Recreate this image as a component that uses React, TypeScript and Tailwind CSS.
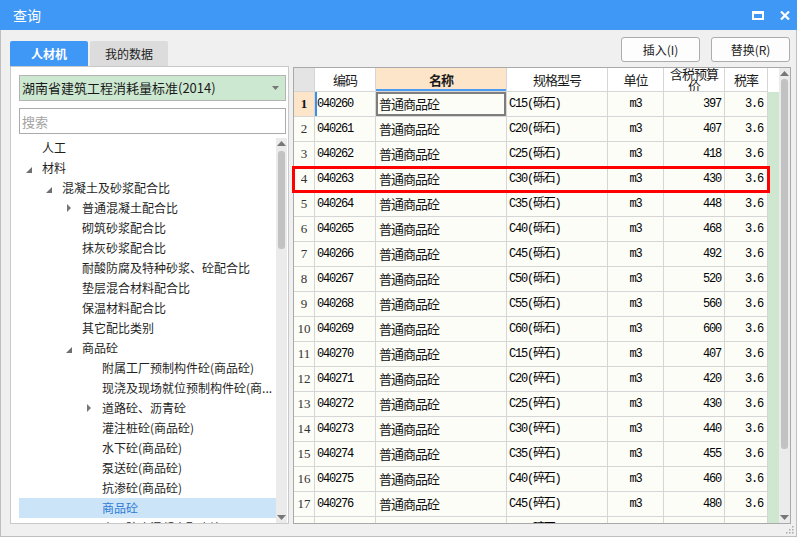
import React from "react"

// ── Data ───────────────────────────────────────────────────────────────────────

type Node = { t: string; l: number; a?: "open" | "closed"; sel?: boolean }

const TREE: Node[] = [
  { t: "人工", l: 0 },
  { t: "材料", l: 0, a: "open" },
  { t: "混凝土及砂浆配合比", l: 1, a: "open" },
  { t: "普通混凝土配合比", l: 2, a: "closed" },
  { t: "砌筑砂浆配合比", l: 2 },
  { t: "抹灰砂浆配合比", l: 2 },
  { t: "耐酸防腐及特种砂浆、砼配合比", l: 2 },
  { t: "垫层混合材料配合比", l: 2 },
  { t: "保温材料配合比", l: 2 },
  { t: "其它配比类别", l: 2 },
  { t: "商品砼", l: 2, a: "open" },
  { t: "附属工厂预制构件砼(商品砼)", l: 3 },
  { t: "现浇及现场就位预制构件砼(商...", l: 3 },
  { t: "道路砼、沥青砼", l: 3, a: "closed" },
  { t: "灌注桩砼(商品砼)", l: 3 },
  { t: "水下砼(商品砼)", l: 3 },
  { t: "泵送砼(商品砼)", l: 3 },
  { t: "抗渗砼(商品砼)", l: 3 },
  { t: "商品砼", l: 3, sel: true },
  { t: "商品防冻混凝土配合比", l: 3 },
]

const LEVEL_PAD = ["pl-[7px]", "pl-[27px]", "pl-[47px]", "pl-[67px]"]

const ROWS: [string, string, number][] = [
  ["040260", "C15(砾石)", 397],
  ["040261", "C20(砾石)", 407],
  ["040262", "C25(砾石)", 418],
  ["040263", "C30(砾石)", 430],
  ["040264", "C35(砾石)", 448],
  ["040265", "C40(砾石)", 468],
  ["040266", "C45(砾石)", 492],
  ["040267", "C50(砾石)", 520],
  ["040268", "C55(砾石)", 560],
  ["040269", "C60(砾石)", 600],
  ["040270", "C15(碎石)", 407],
  ["040271", "C20(碎石)", 420],
  ["040272", "C25(碎石)", 430],
  ["040273", "C30(碎石)", 440],
  ["040274", "C35(碎石)", 455],
  ["040275", "C40(碎石)", 460],
  ["040276", "C45(碎石)", 480],
  ["040277", "C50(碎石)", 500],
]

const CJK = "font-['Noto_Sans_CJK_SC',sans-serif]"
const MONO = "font-['Liberation_Mono','Noto_Sans_CJK_SC',monospace] text-[12px] tracking-[-1.2px] text-black"
const CELL = "h-full border-r border-[#d6d6d6] flex items-center shrink-0 overflow-hidden whitespace-nowrap"

// ── Small drawings ─────────────────────────────────────────────────────────────

function Arrow({ kind }: { kind?: "open" | "closed" }) {
  if (kind === "open")
    return (
      <svg width="7" height="7" className="mt-[4px]">
        <polygon points="6,0 6,6 0,6" fill="#6f6f6f" />
      </svg>
    )
  if (kind === "closed")
    return (
      <svg width="6" height="9">
        <polygon points="1,0 5,4 1,8" fill="#777" />
      </svg>
    )
  return null
}

function ScrollBar({ thumb }: { thumb: string }) {
  return (
    <div className="w-[11px] h-full bg-[#ebebeb] flex flex-col items-center shrink-0">
      <svg width="9" height="5" className="mt-[3px]">
        <polygon points="0,5 4.5,0 9,5" fill="#777" />
      </svg>
      <div className={`w-[7px] mt-[3px] rounded-[3px] bg-[#c2c2c2] ${thumb}`} />
      <div className="flex-1" />
      <svg width="9" height="5" className="mb-[3px]">
        <polygon points="0,0 9,0 4.5,5" fill="#777" />
      </svg>
    </div>
  )
}

// ── Table ──────────────────────────────────────────────────────────────────────

function HeaderRow() {
  return (
    <div className={`flex h-[24px] border-b border-[#d6d6d6] text-[13px] tracking-[-1px] text-[#1b1b1b] ${CJK}`}>
      <div className={`${CELL} w-[21px] bg-[#e4e4e4]`} />
      <div className={`${CELL} w-[61px] bg-white justify-center`}>编码</div>
      <div className={`${CELL} w-[131px] bg-[#fde5c9] justify-center font-bold shadow-[inset_0_-2px_0_#4b9bf0]`}>名称</div>
      <div className={`${CELL} w-[101px] bg-white justify-center`}>规格型号</div>
      <div className={`${CELL} w-[56px] bg-white justify-center`}>单位</div>
      <div className={`${CELL} w-[61px] bg-white justify-center`}>
        <div className="leading-[12px] text-center w-[52px] whitespace-normal">含税预算价</div>
      </div>
      <div className={`${CELL} w-[43px] bg-white justify-center`}>税率</div>
    </div>
  )
}

function DataRow({ i, code, spec, price }: { i: number; code: string; spec: string; price: number }) {
  const first = i === 0
  return (
    <div className="flex h-[25px] shrink-0 border-b border-[#d6d6d6] bg-[#fdfdf8] text-[#111]">
      <div
        className={`${CELL} w-[21px] justify-center font-['Liberation_Serif',serif] text-[13px] ${
          first ? "bg-[#fde5c9] font-bold" : "text-[#333]"
        }`}
      >
        {i + 1}
      </div>
      <div className={`${CELL} w-[61px] pl-[2px] ${MONO} ${first ? "shadow-[inset_2px_0_0_#3b8fea]" : ""}`}>{code}</div>
      <div
        className={`${CELL} w-[131px] pl-[3px] text-[13px] tracking-[-1px] ${CJK} ${
          first ? "shadow-[inset_0_0_0_2px_#7e7e7e]" : ""
        }`}
      >
        普通商品砼
      </div>
      <div className={`${CELL} w-[101px] pl-[2px] ${MONO}`}>{spec}</div>
      <div className={`${CELL} w-[56px] justify-center ${MONO}`}>m3</div>
      <div className={`${CELL} w-[61px] justify-end pr-[3px] ${MONO}`}>{price}</div>
      <div className={`${CELL} w-[43px] justify-end pr-[4px] ${MONO}`}>3.6</div>
    </div>
  )
}

function DataTable() {
  return (
    <div className="relative mt-[5px]">
      <div className="h-[457px] border border-[#a9a9a9] flex overflow-hidden bg-white">
        <div className="w-[474px] flex flex-col shrink-0">
          <HeaderRow />
          {ROWS.map(([code, spec, price], i) => (
            <DataRow key={code} i={i} code={code} spec={spec} price={price} />
          ))}
        </div>
        <div className="w-[11px] flex flex-col shrink-0">
          <div className="h-[24px] bg-white" />
          <div className="flex-1 bg-[#cfe7d1]" />
        </div>
        <ScrollBar thumb="h-[370px]" />
      </div>
      {/* highlight box drawn over row 4 */}
      <div className="absolute left-[-1px] top-[99px] w-[478px] h-[27px] border-[3px] border-[#ff0000]" />
    </div>
  )
}

// ── Left panel ─────────────────────────────────────────────────────────────────

function TreePanel() {
  return (
    <div className="h-[458px] border border-[#c9c9c9] bg-white flex flex-col">
      <div className={`mt-[8px] ml-[8px] w-[267px] h-[26px] shrink-0 border border-[#b4b4b4] bg-[#cde8d1] flex items-center pl-[2px] text-[13px] text-[#1a1a1a] ${CJK}`}>
        湖南省建筑工程消耗量标准(2014)
        <svg width="7" height="4" className="ml-auto mr-[6px]">
          <polygon points="0,0 7,0 3.5,4" fill="#777" />
        </svg>
      </div>
      <input
        placeholder="搜索"
        className={`mt-[7px] ml-[8px] w-[267px] h-[26px] shrink-0 border border-[#ababab] bg-white px-[2px] text-[13px] outline-none placeholder:text-[#a3a3a3] ${CJK}`}
      />
      <div className="mt-[4px] ml-[8px] flex flex-1 min-h-0">
        <div className={`w-[257px] overflow-hidden text-[12px] text-[#1f1f1f] ${CJK}`}>
          {TREE.map((n, i) => (
            <div
              key={i}
              className={`h-[20px] flex items-center whitespace-nowrap ${LEVEL_PAD[n.l]} ${
                n.sel ? "bg-[#cce4f7] text-[#2f7bd6]" : ""
              }`}
            >
              <div className="w-[16px] h-[20px] flex items-center shrink-0">
                <Arrow kind={n.a} />
              </div>
              {n.t}
            </div>
          ))}
        </div>
        <ScrollBar thumb="h-[98px] mt-[5px]" />
      </div>
    </div>
  )
}

// ── Page ───────────────────────────────────────────────────────────────────────

export default function App() {
  return (
    <div className={`w-[797px] h-[537px] overflow-hidden bg-[#f0f0f0] flex flex-col ${CJK}`}>
      {/* Title bar */}
      <div className="h-[30px] shrink-0 bg-[#3f97f6] flex items-center pl-[13px] pr-[7px] text-white text-[14px]">
        查询
        <svg width="12" height="9" className="ml-auto">
          <rect x="1" y="1.5" width="10" height="6.5" fill="none" stroke="#fff" strokeWidth="2" />
          <rect x="0" y="0" width="12" height="3" fill="#fff" />
        </svg>
        <svg width="10" height="9" className="ml-[16px]">
          <path d="M1 0.5 L9 8.5 M9 0.5 L1 8.5" stroke="#fff" strokeWidth="2.2" />
        </svg>
      </div>

      {/* Body */}
      <div className="flex-1 relative flex border-x border-b border-[#bfbfbf]">
        <div className="ml-[9px] w-[279px] pt-[11px] flex flex-col">
          <div className="h-[25px] flex gap-[2px] text-[12px]">
            <div className="w-[78px] rounded-t-[2px] bg-[#3f97f6] text-white font-bold flex items-center justify-center">
              人材机
            </div>
            <div className="w-[78px] rounded-t-[2px] bg-[#dcdcdc] text-[#222] flex items-center justify-center">
              我的数据
            </div>
          </div>
          <TreePanel />
        </div>

        <div className="ml-[4px] w-[498px] pt-[7px] flex flex-col">
          <div className="h-[25px] flex justify-end gap-[11px] pr-[1px] text-[12px] text-[#222]">
            <button className="w-[79px] h-[25px] rounded-[3px] border border-[#acacac] bg-[#fdfdfd]">插入(I)</button>
            <button className="w-[79px] h-[25px] rounded-[3px] border border-[#acacac] bg-[#fdfdfd]">替换(R)</button>
          </div>
          <DataTable />
        </div>

        {/* resize grip */}
        <svg width="8" height="8" className="absolute right-[2px] bottom-[2px]">
          <rect x="6" y="0" width="1.5" height="1.5" fill="#aaa" />
          <rect x="3" y="3" width="1.5" height="1.5" fill="#aaa" />
          <rect x="6" y="3" width="1.5" height="1.5" fill="#aaa" />
          <rect x="0" y="6" width="1.5" height="1.5" fill="#aaa" />
          <rect x="3" y="6" width="1.5" height="1.5" fill="#aaa" />
          <rect x="6" y="6" width="1.5" height="1.5" fill="#aaa" />
        </svg>
      </div>
    </div>
  )
}
